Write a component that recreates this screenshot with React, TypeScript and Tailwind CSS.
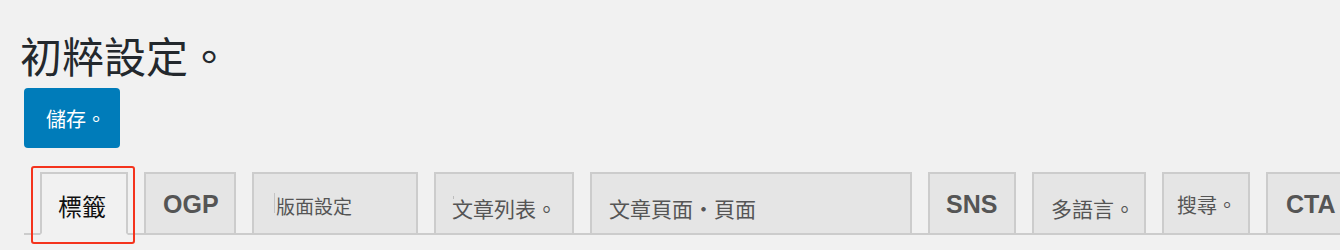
import React from "react";

type Tab = {
	label: string;
	width: string;
	pad: string;
	size: string;
	bold?: boolean;
	active?: boolean;
	mark?: "bar" | "dot";
};

const tabs: Tab[] = [
	{ label: "標籤", width: "w-[88px]", pad: "pl-[16px] pt-[22px]", size: "text-[24px]", active: true },
	{ label: "OGP", width: "w-[92px]", pad: "pl-[17px] pt-[18px]", size: "text-[25px]", bold: true },
	{ label: "版面設定", width: "w-[166px]", pad: "pl-[22px] pt-[24px]", size: "text-[19px]", mark: "bar" },
	{ label: "文章列表。", width: "w-[140px]", pad: "pl-[16px] pt-[25px]", size: "text-[21px]", mark: "dot" },
	{ label: "文章頁面・頁面", width: "w-[322px]", pad: "pl-[17px] pt-[25px]", size: "text-[21px]" },
	{ label: "SNS", width: "w-[88px]", pad: "pl-[16px] pt-[18px]", size: "text-[25px]", bold: true },
	{ label: "多語言。", width: "w-[114px]", pad: "pl-[17px] pt-[25px]", size: "text-[21px]" },
	{ label: "搜尋。", width: "w-[88px]", pad: "pl-[13px] pt-[22px]", size: "text-[20px]" },
	{ label: "CTA", width: "w-[100px]", pad: "pl-[18px] pt-[18px]", size: "text-[25px]", bold: true },
];

function TabItem({ tab }: { tab: Tab }) {
	return (
		<div
			className={`relative -mb-[2px] ml-[16px] flex h-[63px] shrink-0 items-start whitespace-nowrap border-2 border-[#cccccc] leading-none ${tab.width} ${tab.pad} ${tab.size} ${
				tab.bold ? "font-bold" : ""
			} ${
				tab.active
					? "border-b-[#f1f1f1] bg-[#f1f1f1] text-[#111111]"
					: "bg-[#e5e5e5] text-[#555555]"
			}`}
		>
			{tab.label}
			{tab.active && (
				<span className="pointer-events-none absolute -bottom-[11px] -left-[11px] -right-[9px] -top-[8px] rounded-[3px] border-2 border-[#f4331d]" />
			)}
			{tab.mark === "bar" && (
				<span className="absolute left-[20px] top-[19px] h-[20px] w-px bg-[#c4c4c4]" />
			)}
			{tab.mark === "dot" && (
				<span className="absolute left-[17px] top-[22px] h-[3px] w-px bg-[#bdbdbd]" />
			)}
		</div>
	);
}

export default function App() {
	return (
		<div className="h-[250px] w-full overflow-hidden bg-[#f1f1f1] pl-[20px] pt-[38px] font-['Liberation_Sans','Noto_Sans_CJK_TC',sans-serif]">
			<h1 className="text-[42px] font-normal leading-none text-[#23282d]">
				初粹設定。
			</h1>
			<button className="ml-[4px] mt-[8px] flex h-[60px] w-[96px] items-start rounded-[4px] bg-[#007cba] pl-[22px] pt-[22px] text-[20px] leading-none text-white">
				儲存。
			</button>
			<div className="ml-[4px] mt-[24px] flex items-end border-b-2 border-[#cccccc]">
				{tabs.map((tab) => (
					<TabItem key={tab.label} tab={tab} />
				))}
			</div>
		</div>
	);
}
